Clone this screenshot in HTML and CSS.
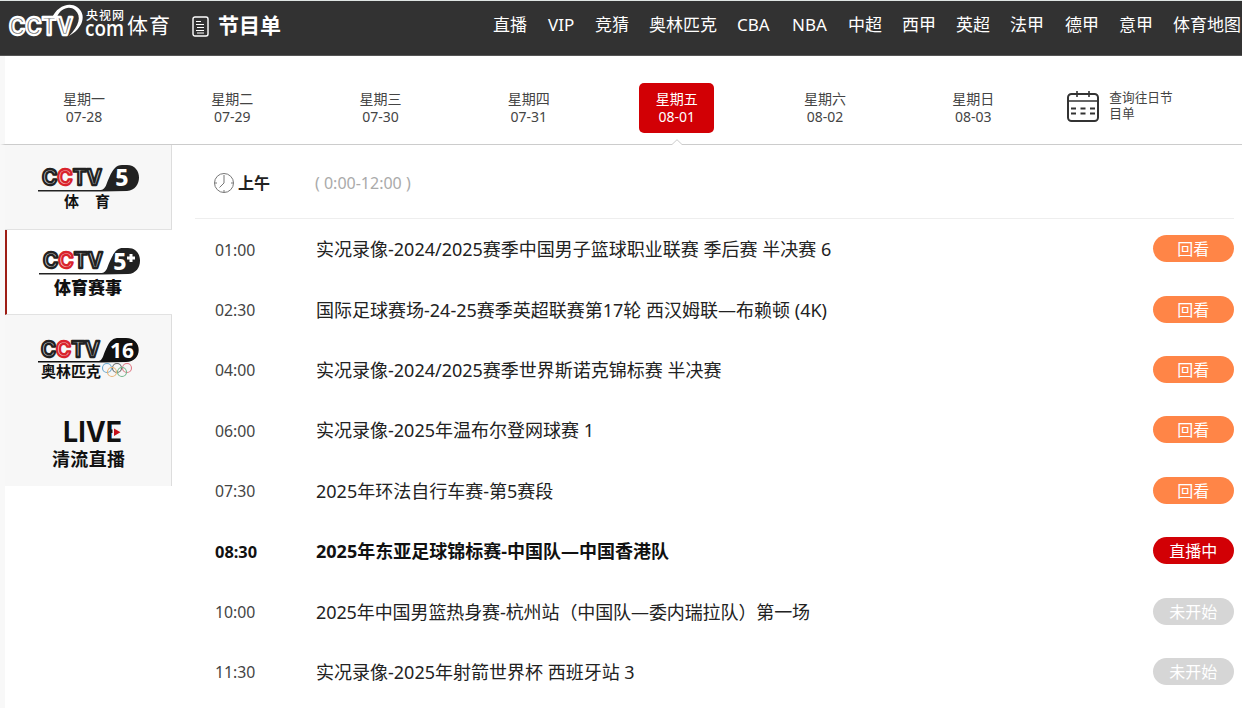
FILE: index.html
```html
<!DOCTYPE html>
<html lang="zh-CN">
<head>
<meta charset="utf-8">
<title>节目单</title>
<link rel="stylesheet" href="styles.css">
</head>
<body>
<header class="topbar">
  <svg class="brand" width="172" height="55" viewBox="0 0 172 55">
    <path d="M52 17C56 6 69 0 77 6C88 14 82 28 69 35C79 25 82 15 75 9C69 4 60 8 57 16Z" fill="#fff"/>
    <text class="mark brand-mark" x="9" y="34" textLength="64" lengthAdjust="spacingAndGlyphs">CCTV</text>
    <text class="brand-small" x="86" y="19" textLength="38">央视网</text>
    <text class="brand-com" x="85" y="35" textLength="39" lengthAdjust="spacingAndGlyphs">com</text>
    <text class="brand-sport" x="127" y="32" textLength="43">体育</text>
  </svg>
  <svg class="list-icon" width="17" height="21" viewBox="0 0 17 21" fill="none" stroke="#fff">
    <rect x="1" y="1" width="15" height="19" rx="2" stroke-width="1.4"/>
    <path d="M4 5.5H9M4 8.5H12M5 11.5H12M4 14.5H12M5 17H12" stroke-width="1.2"/>
  </svg>
  <h1 class="page-title">节目单</h1>
  <nav class="nav"><a>直播</a><a>VIP</a><a>竞猜</a><a>奥林匹克</a><a>CBA</a><a>NBA</a><a>中超</a><a>西甲</a><a>英超</a><a>法甲</a><a>德甲</a><a>意甲</a><a>体育地图</a></nav>
</header>
<section class="dates">
  <div class="day"><span>星期一</span><span>07-28</span></div>
  <div class="day"><span>星期二</span><span>07-29</span></div>
  <div class="day"><span>星期三</span><span>07-30</span></div>
  <div class="day"><span>星期四</span><span>07-31</span></div>
  <div class="day active"><span>星期五</span><span>08-01</span>
    <svg class="notch" width="12" height="7" viewBox="0 0 12 7"><path d="M0 6L6 .7L12 6V7H0Z" fill="#fff"/><path d="M0 5.5H1L6 .7L11 5.5H12" fill="none" stroke="#ccc"/></svg>
  </div>
  <div class="day"><span>星期六</span><span>08-02</span></div>
  <div class="day"><span>星期日</span><span>08-03</span></div>
  <div class="history">
    <svg width="32" height="32" viewBox="0 0 32 32" fill="none" stroke="#333">
      <rect x="1" y="4" width="30" height="27" rx="3.5" stroke-width="2"/>
      <path d="M10 1V7M22 1V7M1 11H31" stroke-width="1.6"/>
      <path d="M4 18.5H9M13.5 18.5H18.5M23 18.5H28M4 23.5H9M13.5 23.5H18.5M23 23.5H28" stroke-width="1.8"/>
    </svg>
    <p>查询往日节<br>目单</p>
  </div>
</section>
<main class="content">
  <aside class="channels">
    <div class="channel bordered">
      <svg width="102" height="50" viewBox="0 0 102 50">
        <path d="M0 27H63C68 26 68 21 71 15C75 6 78 2 84 2H89C105 2 105 27 89 28L63 28.500H0Z" fill="#222"/>
        <text class="mark" x="4" y="21.500" textLength="60" lengthAdjust="spacingAndGlyphs">C<tspan class="mark-red">C</tspan>TV</text>
        <text class="number" x="84" y="23" text-anchor="middle">5</text>
        <text class="label thin" x="26" y="43.500">体</text><text class="label thin" x="57" y="43.500">育</text>
      </svg>
    </div>
    <div class="channel selected">
      <svg width="102" height="50" viewBox="0 0 102 50">
        <path d="M0 25H63C68 24 68 19 71 13C75 4 78 0 84 0H89C105 0 105 25 89 26L63 26.500H0Z" fill="#222"/>
        <text class="mark" x="4" y="20" textLength="60" lengthAdjust="spacingAndGlyphs">C<tspan class="mark-red">C</tspan>TV</text>
        <text class="number" x="81" y="22" text-anchor="middle">5</text>
        <path d="M92 6V14M88 10H96" stroke="#fff" stroke-width="3"/>
        <text class="label" x="15" y="46" textLength="68">体育赛事</text>
      </svg>
    </div>
    <div class="channel right-line low">
      <svg width="102" height="50" viewBox="0 0 102 50">
        <path d="M0 25H61C65 24 65 19 68 13C72 4 75 2 81 2H88C105 2 105 26 88 26L63 26.500H0Z" fill="#111"/>
        <text class="mark" x="3" y="20.500" textLength="59" lengthAdjust="spacingAndGlyphs">C<tspan class="mark-red">C</tspan>TV</text>
        <text class="number sixteen" x="84" y="21.500" text-anchor="middle">16</text>
        <text class="label olympic" x="3" y="40.500" textLength="60">奥林匹克</text>
        <g fill="none" stroke-width="1.100"><circle cx="69" cy="32" r="4.500" stroke="#69a7ce"/><circle cx="79" cy="32" r="4.500" stroke="#666"/><circle cx="89" cy="32" r="4.500" stroke="#df7a86"/><circle cx="74" cy="36" r="4.500" stroke="#e9b577"/><circle cx="84" cy="36" r="4.500" stroke="#73b58a"/></g>
      </svg>
    </div>
    <div class="channel right-line">
      <svg width="102" height="50" viewBox="0 0 102 50">
        <text class="live" x="25" y="24" textLength="59" lengthAdjust="spacingAndGlyphs">LIVE</text>
        <path d="M74.500 8.500H85V20H74.500Z" fill="#f7f7f7"/><path d="M76 10.500L82.500 14.200L76 18Z" fill="#c61019"/>
        <text class="label clear" x="14" y="48" textLength="73">清流直播</text>
      </svg>
    </div>
  </aside>
  <section class="schedule">
    <div class="period">
      <svg class="clock" width="22" height="22" viewBox="0 0 22 22" fill="none" stroke="#777">
        <circle cx="11" cy="11" r="9.500"/><path d="M11 3V11L6.500 15.500M2 11H4M18 11H20M11 18V20"/>
      </svg>
      <h2>上午</h2><span class="range">( 0:00-12:00 )</span>
    </div>
    <div class="row"><time>01:00</time><p>实况录像-2024/2025赛季中国男子篮球职业联赛 季后赛 半决赛 6</p><button class="pill">回看</button></div>
    <div class="row"><time>02:30</time><p>国际足球赛场-24-25赛季英超联赛第17轮 西汉姆联—布赖顿 (4K)</p><button class="pill">回看</button></div>
    <div class="row"><time>04:00</time><p>实况录像-2024/2025赛季世界斯诺克锦标赛 半决赛</p><button class="pill">回看</button></div>
    <div class="row"><time>06:00</time><p>实况录像-2025年温布尔登网球赛 1</p><button class="pill">回看</button></div>
    <div class="row"><time>07:30</time><p>2025年环法自行车赛-第5赛段</p><button class="pill">回看</button></div>
    <div class="row current"><time>08:30</time><p>2025年东亚足球锦标赛-中国队—中国香港队</p><button class="pill live-now">直播中</button></div>
    <div class="row"><time>10:00</time><p class="snug">2025年中国男篮热身赛-杭州站（中国队—委内瑞拉队）第一场</p><button class="pill waiting">未开始</button></div>
    <div class="row"><time>11:30</time><p>实况录像-2025年射箭世界杯 西班牙站 3</p><button class="pill waiting">未开始</button></div>
  </section>
</main>
</body>
</html>
```
FILE: styles.css
```css
* { box-sizing: border-box; }
body {
  margin: 0; width: 1242px; height: 708px; overflow: hidden; background: #fff; color: #222;
  font-family: "Noto Sans", "Noto Sans CJK SC", sans-serif;
}
h1, h2, p { margin: 0; }
svg { overflow: visible; }
.topbar { height: 56px; display: flex; background: #323232; border-top: 1px solid #dfe5e3; border-bottom: 1px solid #555; color: #fff; }
.brand { flex: none; }
.list-icon { flex: none; margin: 15px 0 0 20px; }
.page-title { margin-left: 9px; width: 65px; font: 700 21px/46px "Noto Sans CJK SC", sans-serif; white-space: nowrap; }
.nav { margin-left: 210px; display: grid; grid-template-columns: 55px 47px 54px 88px 55px 56px 54px 54px 54px 55px 54px 54px 69px; font-size: 17px; line-height: 48px; white-space: nowrap; }
.mark { font: 700 22px Inter, sans-serif; fill: #ccc; stroke: #222; stroke-width: 2.3px; stroke-linejoin: round; }
.mark-red { stroke: #d9232c; fill: #f5c5c7; }
.brand-mark { font-size: 24px; fill: #666; stroke: #fff; }
.brand-small { font: 500 12px "Noto Sans CJK SC", sans-serif; fill: #fff; }
.brand-com { font: 600 21px "Open Sans", sans-serif; fill: #fff; }
.brand-sport { font: 400 21px "Noto Sans CJK SC", sans-serif; fill: #fff; }
.dates { height: 89px; padding: 27px 0 0 5px; display: grid; grid-template-columns: repeat(7, 148.2px) 1fr; border-bottom: 1px solid #ccc; border-left: 5px solid #f8f8f8; }
.day { position: relative; justify-self: center; width: 75px; height: 50px; padding-top: 7px; display: flex; flex-direction: column; align-items: center; font-size: 14px; line-height: 17.5px; color: #444; }
.active { background: #d20005; color: #fff; border-radius: 5px; }
.notch { position: absolute; left: 32px; top: 56px; }
.history { display: flex; gap: 10px; padding: 7px 0 0 20px; font-size: 12.7px; line-height: 15.5px; color: #444; }
.history svg { flex: none; }
.content { display: flex; height: 563px; border-left: 5px solid #f8f8f8; }
.channels { width: 167px; flex: none; }
.channel { height: 85.2px; background: #f7f7f7; display: flex; justify-content: center; padding: 17.5px 0 0 2px; }
.channel svg { flex: none; }
.low { padding-top: 21px; }
.bordered { border-right: 1px solid #ddd; border-bottom: 1px solid #e2e2e2; }
.right-line { border-right: 1px solid #ddd; }
.selected { background: #fff; border-left: 2px solid #9d1d15; border-bottom: 1px solid #e2e2e2; padding-left: 0; }
.number { font: 800 23px "Noto Sans", sans-serif; fill: #fff; }
.sixteen { font-size: 21px; font-weight: 700; }
.label { font: 900 17px "Noto Sans CJK SC", sans-serif; fill: #111; }
.thin, .olympic { font-size: 15px; font-weight: 700; }
.clear { font-size: 18px; font-weight: 700; }
.live { font: 700 28px Inter, sans-serif; fill: #111; }
.schedule { flex: 1; padding: 0 8px 0 23px; }
.period { height: 74px; border-bottom: 1px solid #eee; display: flex; align-items: center; padding: 2px 0 0 18px; }
.period h2 { width: 80px; padding: 0 0 2px 3px; font: 700 16px "Noto Sans CJK SC", sans-serif; }
.clock { flex: none; }
.range { color: #aaa; font-size: 16px; }
.row { height: 60.4px; display: grid; grid-template-columns: 101px 1fr 81.5px; align-items: center; padding-left: 20px; }
.row time { font-size: 15.8px; color: #444; padding-top: 1px; }
.row p { font-size: 18px; white-space: nowrap; padding-bottom: 2px; }
.row .snug { letter-spacing: -0.1px; }
.current time, .current p { font-weight: 700; color: #111; }
.current time { font-size: 16.4px; }
.pill { height: 27px; border: 0; border-radius: 14px; padding: 0; margin-bottom: 1px; background: #ff8547; color: #fff; font: 400 16px/27px "Noto Sans CJK SC", sans-serif; }
.live-now { background: #d20005; }
.waiting { background: #d6d6d6; }
```
